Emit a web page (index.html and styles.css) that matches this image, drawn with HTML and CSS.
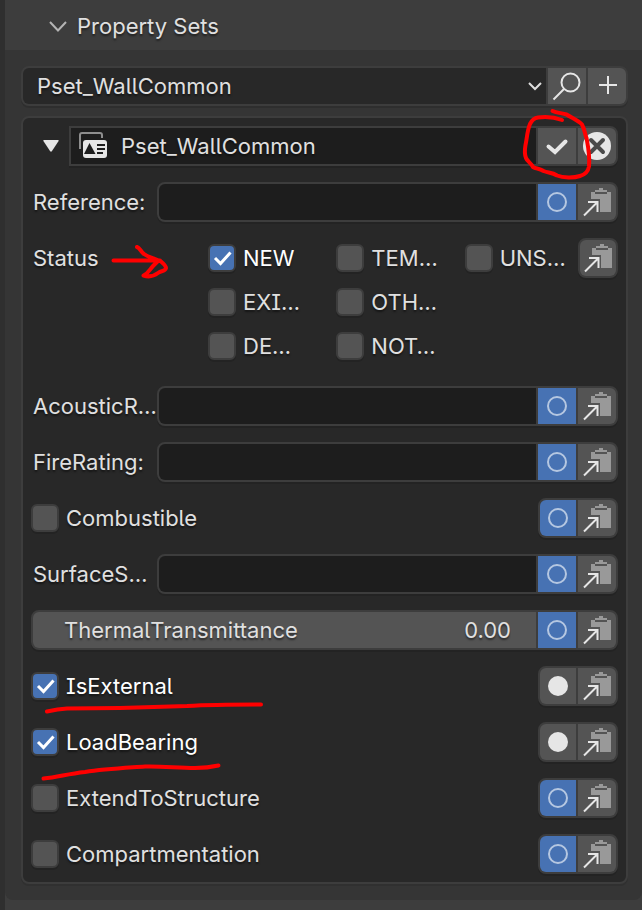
FILE: index.html
```html
<!DOCTYPE html>
<html lang="en">
<head>
<meta charset="utf-8">
<title>Property Sets</title>
<link rel="stylesheet" href="styles.css">
</head>
<body>
<svg class="symbols" aria-hidden="true">
  <symbol id="paste" viewBox="-2 0 38 36">
    <path d="M19 4h4v2h4v2h4v20H20V15h-9V8h4V6h4z" fill="#999"/>
    <path d="M15 9h12" stroke="#545454" stroke-width="2"/>
    <path d="M4 31.500 17.500 18M8 18h9.500v10" fill="none" stroke="#e6e6e6" stroke-width="2"/>
  </symbol>
  <symbol id="ring" viewBox="0 0 20 20"><circle cx="10" cy="10" r="9" fill="none" stroke="#b5c7e1" stroke-width="2"/></symbol>
  <symbol id="dot" viewBox="0 0 20 20"><circle cx="10" cy="10" r="10" fill="#e6e6e6"/></symbol>
  <symbol id="tick" viewBox="0 0 28 28"><path d="M7 14l5.500 5.500L22.500 8.500" fill="none" stroke="#fff" stroke-width="3"/></symbol>
</svg>
<main class="editor">
  <header class="header">
    <button class="toggle" type="button" aria-expanded="true">
      <svg width="18" height="11" viewBox="0 0 18 11" aria-hidden="true"><path d="M1 1l8 8.500L17 1" fill="none" stroke="#b4b4b4" stroke-width="2"/></svg>
      Property Sets
    </button>
  </header>
  <div class="body">
    <div class="group picker">
      <div class="select-wrap">
        <select aria-label="Property set"><option>Pset_WallCommon</option></select>
        <svg class="caret" width="14" height="9" viewBox="0 0 14 9" aria-hidden="true"><path d="M1 1l6 6 6-6" fill="none" stroke="#dedede" stroke-width="2"/></svg>
      </div>
      <button class="btn" type="button" aria-label="Search"><svg width="38" height="36" viewBox="0 0 38 36"><circle cx="22.500" cy="14.500" r="9" fill="none" stroke="#e6e6e6" stroke-width="2"/><path d="M16 21 5.500 31.500" stroke="#e6e6e6" stroke-width="2"/></svg></button>
      <button class="btn" type="button" aria-label="Add"><svg width="38" height="36" viewBox="0 0 38 36"><path d="M20 8v18M11 17h18" stroke="#e6e6e6" stroke-width="2"/></svg></button>
    </div>

    <section class="panel">
      <div class="row">
        <button class="disclose" type="button" aria-label="Collapse"><svg width="16" height="12" viewBox="0 0 16 12"><path d="M1 0h14q1 0 .6 1L9 11q-1 1.500-2 0L.4 1Q0 0 1 0z" fill="#e6e6e6"/></svg></button>
        <div class="group square">
          <div class="name">
            <svg width="30" height="28" viewBox="1 1 30 28" aria-hidden="true">
              <path d="M2 18V4q0-2 2-2h18q2 0 2 2v3" fill="none" stroke="#8e8e8e" stroke-width="2"/>
              <rect x="5" y="9" width="24" height="18" rx="3" fill="#e6e6e6"/>
              <path d="M11.500 12 17.500 23H6z" fill="#1d1d1d"/>
              <path d="M19 14h8M19 18h8M19 22h6" stroke="#1d1d1d" stroke-width="2"/>
            </svg>
            <input type="text" value="Pset_WallCommon" aria-label="Property set name">
          </div>
          <button class="btn" type="button" aria-label="Apply"><svg width="38" height="36" viewBox="0 0 38 36"><path d="M10.500 18.500l6.500 5.500L27.500 13.500" fill="none" stroke="#e6e6e6" stroke-width="4" stroke-linecap="round"/></svg></button>
          <button class="btn" type="button" aria-label="Cancel"><svg width="38" height="36" viewBox="0 0 38 36"><circle cx="19" cy="18" r="14" fill="#e6e6e6"/><path d="M13 12l12 12M25 12l-12 12" stroke="#4a4a4a" stroke-width="4" stroke-linecap="round"/></svg></button>
        </div>
        <svg class="mark mark-end" width="100" height="40" viewBox="518 126 100 40" aria-hidden="true"><path d="M552.500 111C557 113 562 113 566.500 114.500C572 118 579 121 582 124.500C585 130 585 135 586.500 138C588 146 590 155 589 166.500C588 172 584 175 580 176C574 178 563 178 557 175.500C552 172 548 173 543.500 171C539 168 536 169 533 167C531 163 527 161 526 158C524 153 525 148 525.500 145C527 139 527 131 530 124C532 120 534 118 538 117.500C546 116.500 554 117 562 120"/></svg>
      </div>

      <div class="row">
        <label class="label" for="reference">Reference:</label>
        <div class="group">
          <input class="field" id="reference" type="text">
          <button class="btn null" type="button" aria-label="Null"><svg width="20" height="20"><use href="#ring"/></svg></button>
          <button class="btn" type="button" aria-label="Copy"><svg width="38" height="36"><use href="#paste"/></svg></button>
        </div>
      </div>

      <div class="row status">
        <span class="status-label">Status</span>
        <div class="options">
          <label class="check"><span class="box"><input type="checkbox" checked><svg width="28" height="28"><use href="#tick"/></svg></span><span>NEW</span></label>
          <label class="check"><span class="box"><input type="checkbox"></span><span>TEM…</span></label>
          <label class="check"><span class="box"><input type="checkbox"></span><span>UNS…</span></label>
          <label class="check"><span class="box"><input type="checkbox"></span><span>EXI…</span></label>
          <label class="check"><span class="box"><input type="checkbox"></span><span>OTH…</span></label>
          <label class="check first-col"><span class="box"><input type="checkbox"></span><span>DE…</span></label>
          <label class="check"><span class="box"><input type="checkbox"></span><span>NOT…</span></label>
        </div>
        <div class="group fit"><button class="btn" type="button" aria-label="Copy"><svg width="38" height="36"><use href="#paste"/></svg></button></div>
        <svg class="mark" width="150" height="40" viewBox="31 238 150 40" aria-hidden="true"><path d="M113.500 260.500H160M137 247C140 248 141 252 144 254C148 257 153 258 161 261.500C164 264 166 266 166 268C165 272 162 270 158 273C154 276 148 277 143.500 275.500C149 273 150 269 153 266L158 261"/></svg>
      </div>

      <div class="row">
        <label class="label" for="acoustic">AcousticR…</label>
        <div class="group">
          <input class="field" id="acoustic" type="text">
          <button class="btn null" type="button" aria-label="Null"><svg width="20" height="20"><use href="#ring"/></svg></button>
          <button class="btn" type="button" aria-label="Copy"><svg width="38" height="36"><use href="#paste"/></svg></button>
        </div>
      </div>

      <div class="row">
        <label class="label" for="fire">FireRating:</label>
        <div class="group">
          <input class="field" id="fire" type="text">
          <button class="btn null" type="button" aria-label="Null"><svg width="20" height="20"><use href="#ring"/></svg></button>
          <button class="btn" type="button" aria-label="Copy"><svg width="38" height="36"><use href="#paste"/></svg></button>
        </div>
      </div>

      <div class="row">
        <label class="check"><span class="box"><input type="checkbox"></span><span>Combustible</span></label>
        <div class="group fit">
          <button class="btn null" type="button" aria-label="Null"><svg width="20" height="20"><use href="#ring"/></svg></button>
          <button class="btn" type="button" aria-label="Copy"><svg width="38" height="36"><use href="#paste"/></svg></button>
        </div>
      </div>

      <div class="row">
        <label class="label" for="surface">SurfaceS…</label>
        <div class="group">
          <input class="field" id="surface" type="text">
          <button class="btn null" type="button" aria-label="Null"><svg width="20" height="20"><use href="#ring"/></svg></button>
          <button class="btn" type="button" aria-label="Copy"><svg width="38" height="36"><use href="#paste"/></svg></button>
        </div>
      </div>

      <div class="row">
        <div class="group">
          <div class="number">
            <label for="thermal">ThermalTransmittance</label>
            <input id="thermal" type="text" inputmode="decimal" value="0.00">
          </div>
          <button class="btn null" type="button" aria-label="Null"><svg width="20" height="20"><use href="#ring"/></svg></button>
          <button class="btn" type="button" aria-label="Copy"><svg width="38" height="36"><use href="#paste"/></svg></button>
        </div>
      </div>

      <div class="row">
        <label class="check"><span class="box"><input type="checkbox" checked><svg width="28" height="28"><use href="#tick"/></svg></span><span>IsExternal</span></label>
        <div class="group fit">
          <button class="btn" type="button" aria-label="Set null"><svg width="20" height="20"><use href="#dot"/></svg></button>
          <button class="btn" type="button" aria-label="Copy"><svg width="38" height="36"><use href="#paste"/></svg></button>
        </div>
        <svg class="mark" width="240" height="40" viewBox="31 666 240 40" aria-hidden="true"><path d="M47 711.500C54 710 60 709 67 708.500L120 708L187 706C205 705 230 704.500 261 704.500"/></svg>
      </div>

      <div class="row">
        <label class="check"><span class="box"><input type="checkbox" checked><svg width="28" height="28"><use href="#tick"/></svg></span><span>LoadBearing</span></label>
        <div class="group fit">
          <button class="btn" type="button" aria-label="Set null"><svg width="20" height="20"><use href="#dot"/></svg></button>
          <button class="btn" type="button" aria-label="Copy"><svg width="38" height="36"><use href="#paste"/></svg></button>
        </div>
        <svg class="mark" width="240" height="40" viewBox="31 722 240 40" aria-hidden="true"><path d="M43.500 778.500C58 777.500 66 774 85 772C105 769 125 768 145 766.500C162 766 178 768 195 768C205 768 212 767 218.500 765.500"/></svg>
      </div>

      <div class="row">
        <label class="check"><span class="box"><input type="checkbox"></span><span>ExtendToStructure</span></label>
        <div class="group fit">
          <button class="btn null" type="button" aria-label="Null"><svg width="20" height="20"><use href="#ring"/></svg></button>
          <button class="btn" type="button" aria-label="Copy"><svg width="38" height="36"><use href="#paste"/></svg></button>
        </div>
      </div>

      <div class="row">
        <label class="check"><span class="box"><input type="checkbox"></span><span>Compartmentation</span></label>
        <div class="group fit">
          <button class="btn null" type="button" aria-label="Null"><svg width="20" height="20"><use href="#ring"/></svg></button>
          <button class="btn" type="button" aria-label="Copy"><svg width="38" height="36"><use href="#paste"/></svg></button>
        </div>
      </div>
    </section>
  </div>
</main>
</body>
</html>
```
FILE: styles.css
```css
* {
  box-sizing: border-box;
}

body {
  margin: 0;
  background: #3d3d3d;
  color: #e0e0e0;
  font: 22px/28px Inter, "Liberation Sans", sans-serif;
  font-feature-settings: "cv05", "cv08";
  text-shadow: 0 2px 2px rgba(0, 0, 0, 0.5);
}

button,
input,
select {
  margin: 0;
  padding: 0;
  border: 0;
  border-radius: 0;
  background: none;
  color: inherit;
  font: inherit;
  font-feature-settings: inherit;
  text-shadow: inherit;
  appearance: none;
}

svg {
  display: block;
  flex: none;
}

.symbols {
  position: absolute;
  width: 0;
  height: 0;
}

.editor {
  min-height: 100vh;
  border-left: 5px solid #2f2f2f;
}

.header {
  display: flex;
  height: 50px;
  padding: 2px 44px 0;
}

.toggle {
  display: flex;
  align-items: center;
  gap: 10px;
}

.body {
  display: flex;
  flex-direction: column;
  gap: 10px;
  padding: 16px 14px 16px 16px;
  background: #353535;
  border-radius: 0 0 8px 8px;
}

.panel {
  display: flex;
  flex-direction: column;
  gap: 16px;
  padding: 8px;
  border: 2px solid #3d3d3d;
  border-radius: 8px;
  background: #282828;
  box-shadow: 0 2px 0 #303030;
}

.row {
  position: relative;
  display: flex;
  align-items: center;
  min-height: 40px;
}

.label {
  width: 126px;
  padding-left: 2px;
  flex: none;
  white-space: nowrap;
}

.group {
  display: flex;
  flex: 1;
  min-width: 0;
  height: 40px;
  border: 2px solid #3d3d3d;
  border-radius: 8px;
  background: #3d3d3d;
  overflow: hidden;
  box-shadow: 0 2px 0 rgba(0, 0, 0, 0.12);
}

.picker {
  flex: none;
}

.fit {
  flex: none;
  margin-left: auto;
}

.square {
  border-radius: 0 8px 8px 0;
}

.btn {
  display: flex;
  align-items: center;
  justify-content: center;
  width: 40px;
  flex: none;
  border-left: 2px solid #3d3d3d;
  background: #545454;
}

.btn:first-child {
  width: 36px;
  border-left: 0;
}

.null {
  background: #4772b3;
}

.field {
  flex: 1;
  min-width: 0;
  padding: 0 12px;
  background: #1d1d1d;
}

.select-wrap {
  display: grid;
  flex: 1;
  align-items: center;
  background: #282828;
}

.select-wrap > * {
  grid-area: 1 / 1;
}

.select-wrap select {
  width: 100%;
  height: 36px;
  padding-left: 14px;
}

.caret {
  justify-self: end;
  margin-right: 4px;
  pointer-events: none;
}

.disclose {
  display: flex;
  width: 38px;
  flex: none;
  padding-left: 12px;
}

.name {
  display: flex;
  flex: 1;
  min-width: 0;
  align-items: center;
  gap: 12px;
  padding-left: 8px;
  background: #1d1d1d;
}

.name input {
  flex: 1;
  min-width: 0;
}

.number {
  display: flex;
  flex: 1;
  min-width: 0;
  align-items: center;
  justify-content: space-between;
  padding: 0 25px 0 31px;
  background: #545454;
}

.number input {
  width: 80px;
  text-align: right;
}

.check {
  display: flex;
  align-items: center;
  gap: 7px;
  height: 40px;
  white-space: nowrap;
}

.check:has(:checked) {
  color: #fff;
}

.box {
  display: grid;
  flex: none;
}

.box > * {
  grid-area: 1 / 1;
}

.box svg {
  pointer-events: none;
}

.box input {
  width: 28px;
  height: 28px;
  border: 2px solid #3d3d3d;
  border-radius: 6px;
  background: #545454;
  box-shadow: 0 2px 0 rgba(0, 0, 0, 0.12);
}

.box input:checked {
  background: #4772b3;
}

.status {
  align-items: flex-start;
  padding-bottom: 4px;
}

.status-label {
  width: 177px;
  flex: none;
  padding: 6px 2px;
}

.options {
  display: grid;
  flex: 1;
  grid-template-columns: repeat(3, minmax(0, 1fr));
  gap: 4px 24px;
  margin-right: 9px;
}

.first-col {
  grid-column: 1;
}

.mark {
  position: absolute;
  top: 0;
  left: 0;
  z-index: 1;
  overflow: visible;
  pointer-events: none;
  fill: none;
  stroke: #f00;
  stroke-width: 4;
  stroke-linecap: round;
  stroke-linejoin: round;
}

.mark-end {
  right: 0;
  left: auto;
}
```
